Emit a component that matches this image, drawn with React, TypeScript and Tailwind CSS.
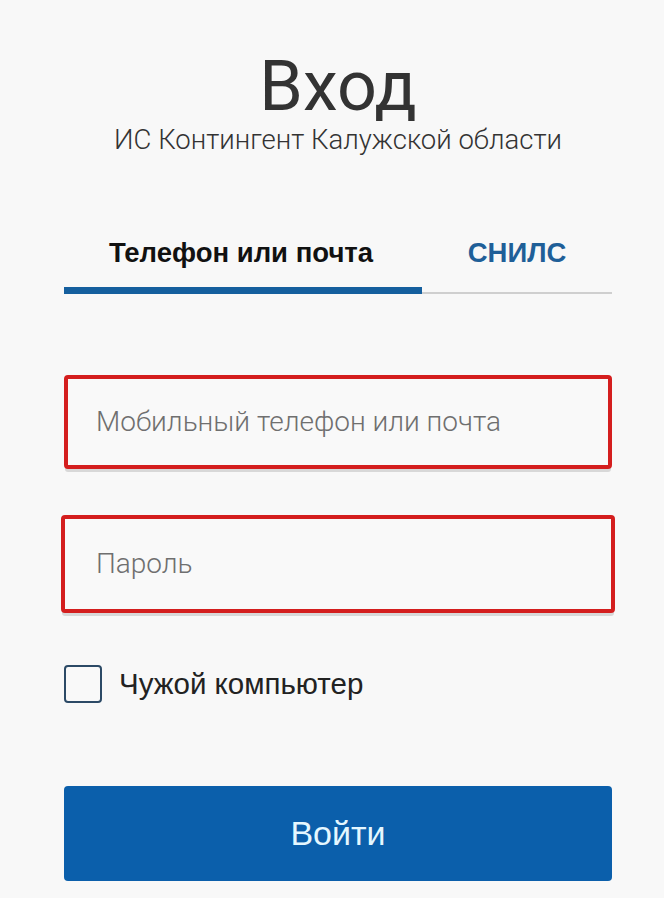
export default function App() {
  return (
    <div className="min-h-[898px] w-full bg-[#f8f8f8] font-['Liberation_Sans',sans-serif]">
      <div className="ml-[64px] mr-[52px] flex flex-col pt-[51px]">
        <h1 className="text-center font-['Roboto',sans-serif] text-[70px] leading-[70px] font-normal text-[#333]">
          Вход
        </h1>
        <p className="mt-[4px] text-center font-['Roboto',sans-serif] text-[27.5px] leading-[30px] font-light text-[#333]">
          ИС Контингент Калужской области
        </p>

        <div className="mt-[80px] flex">
          <div className="flex w-[358px] flex-col">
            <span className="pr-[4px] text-center text-[27.5px] leading-[36px] font-bold text-[#111]">
              Телефон или почта
            </span>
            <div className="mt-[16px] h-[7px] bg-[#155f9e]" />
          </div>
          <div className="flex flex-1 flex-col">
            <span className="text-center text-[27.5px] leading-[36px] font-bold text-[#1f5f98]">СНИЛС</span>
            <div className="mt-[21px] h-[2px] bg-[#cfcfcf]" />
          </div>
        </div>

        <div className="mt-[81px] flex flex-col">
          <div className="rounded-[4px] border-[4px] border-[#d41e1e] bg-[#f9f9f9] px-[28px] py-[26px] shadow-[0_4px_0_-1px_#d8d8d8]">
            <span className="font-['Roboto',sans-serif] text-[28px] leading-[34px] font-light text-[#6f6f6f]">
              Мобильный телефон или почта
            </span>
          </div>
          <div className="-mx-[3px] mt-[46px] rounded-[4px] border-[4px] border-[#d41e1e] bg-[#f9f9f9] px-[31px] py-[28px] shadow-[0_4px_0_-1px_#d8d8d8]">
            <span className="font-['Roboto',sans-serif] text-[28px] leading-[34px] font-light text-[#6f6f6f]">
              Пароль
            </span>
          </div>
        </div>

        <label className="mt-[52px] flex items-center gap-[17px]">
          <span className="h-[38px] w-[38px] rounded-[4px] border-2 border-[#2c4a66] bg-[#f9f9f9]" />
          <span className="text-[29.5px] leading-[38px] text-[#222]">Чужой компьютер</span>
        </label>

        <button className="mt-[83px] h-[95px] w-full rounded-[4px] bg-[#0b5fab] text-[34px] font-normal text-[#e4f7ff]">
          Войти
        </button>
      </div>
    </div>
  )
}
